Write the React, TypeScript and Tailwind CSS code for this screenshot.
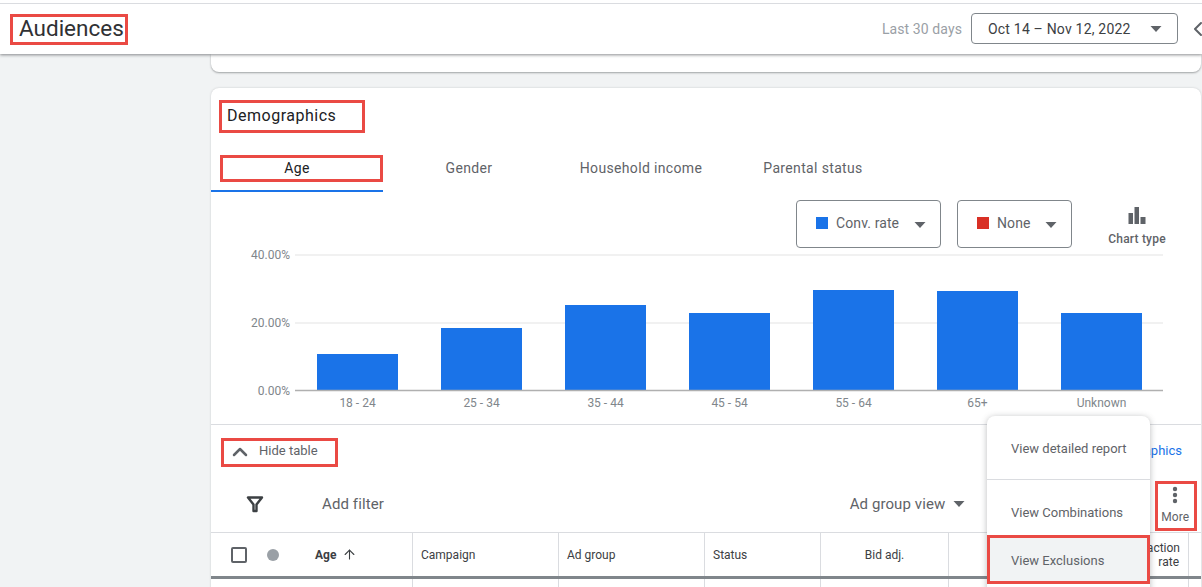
import React from "react";
import { ArrowUp, ChevronLeft, ChevronUp } from "lucide-react";

const bars = [
  { label: "18 - 24", top: 354 },
  { label: "25 - 34", top: 328 },
  { label: "35 - 44", top: 305 },
  { label: "45 - 54", top: 313 },
  { label: "55 - 64", top: 290 },
  { label: "65+", top: 291 },
  { label: "Unknown", top: 313 },
];

const tabs = ["Age", "Gender", "Household income", "Parental status"];

function Caret({ className }: { className?: string }) {
  return (
    <svg width="12" height="6" viewBox="0 0 12 6" className={className}>
      <path d="M0.5 0h11L6 6z" fill="currentColor" />
    </svg>
  );
}

function Chart() {
  return (
    <svg width="991" height="172" viewBox="211 245 991 172" className="block font-['Roboto',sans-serif]">
      <line x1="295" x2="1163" y1="255" y2="255" stroke="#ececec" strokeWidth="1.5" />
      <line x1="295" x2="1163" y1="323" y2="323" stroke="#ececec" strokeWidth="1.5" />
      {bars.map((b, i) => (
        <rect key={b.label} x={317 + i * 124} y={b.top} width="81" height={391 - b.top} fill="#1a73e8" />
      ))}
      <line x1="295" x2="1163" y1="390.5" y2="390.5" stroke="#b0b0b0" strokeWidth="1.5" />
      {["40.00%", "20.00%", "0.00%"].map((t, i) => (
        <text key={t} x="290" y={259 + i * 68} textAnchor="end" fontSize="12" fill="#80868b">
          {t}
        </text>
      ))}
      {bars.map((b, i) => (
        <text key={b.label} x={357.5 + i * 124} y={407} textAnchor="middle" fontSize="12" fill="#80868b">
          {b.label}
        </text>
      ))}
    </svg>
  );
}

function Selector({ color, label, width }: { color: string; label: string; width: string }) {
  return (
    <div className={`${width} h-12 flex items-center pl-[19px] pr-3.5 border border-[#80868b] rounded bg-white`}>
      <span className={`w-3 h-3 -mt-0.5 ${color}`} />
      <span className="ml-2 -mt-0.5 text-sm tracking-[0.1px] text-[#5f6368]">{label}</span>
      <Caret className="ml-auto mt-0.5 text-[#5f6368]" />
    </div>
  );
}

export default function App() {
  return (
    <div className="relative w-[1202px] h-[587px] overflow-hidden bg-[#f1f3f4] font-['Roboto',sans-serif] text-[#3c4043]">
      <header className="relative z-10 h-[54px] pt-[3px] bg-white shadow-[0_1px_3px_rgba(60,64,67,0.6)]">
        <div className="h-[51px] border-t border-[#dadce0] flex items-center pl-[19px]">
          <h1 className="text-[22.5px] text-[#303134] leading-none -mt-[2px]">Audiences</h1>
          <span className="ml-auto text-sm tracking-[0.1px] text-[#9aa0a6]">Last 30 days</span>
          <div className="ml-[9px] -mt-px w-[207px] h-[31px] flex items-center pl-4 pr-[15px] border border-[#80868b] rounded text-sm tracking-[0.2px] text-[#3c4043]">
            Oct 14 – Nov 12, 2022
            <Caret className="ml-auto text-[#5f6368]" />
          </div>
          <ChevronLeft size={24} strokeWidth={2} className="ml-2 -mr-[8px] w-[24px] text-[#5f6368]" />
        </div>
      </header>

      <main className="pl-[211px] pr-px">
        <div className="h-[18px] bg-white rounded-b-lg shadow-[0_1px_2px_rgba(60,64,67,0.45)]" />

        <section className="mt-4 h-[520px] bg-white rounded-t-lg shadow-[0_0_2px_rgba(60,64,67,0.25)]">
          <h2 className="pt-4 pl-4 h-[63px] text-base font-[450] tracking-[0.5px] text-[#202124]">Demographics</h2>

          <div className="flex h-[41px]">
            {tabs.map((t, i) => (
              <div
                key={t}
                className={
                  i === 0
                    ? "w-[172px] pt-[7px] text-center text-sm font-[450] tracking-[0.35px] text-[#202124] border-b-2 border-[#1a73e8]"
                    : "w-[172px] pt-[7px] text-center text-sm font-[450] tracking-[0.35px] text-[#5f6368]"
                }
              >
                {t}
              </div>
            ))}
          </div>

          <div className="flex h-[53px] pt-2 pl-[585px] gap-4">
            <Selector color="bg-[#1a73e8]" label="Conv. rate" width="w-[145px]" />
            <Selector color="bg-[#d93025]" label="None" width="w-[115px]" />
            <div className="ml-[19px] flex flex-col items-center text-xs font-medium tracking-[0.2px] text-[#5f6368]">
              <svg width="18" height="17" viewBox="0 0 18 17" className="mt-[7px] shrink-0">
                <path d="M0.5 6h4.5v11H0.5zM6.5 0h4.5v17H6.5zM12.5 10h5v7h-5z" fill="#5f6368" />
              </svg>
              <span className="mt-[7px] w-[60px] text-center whitespace-nowrap">Chart type</span>
            </div>
          </div>

          <Chart />

          <div className="h-[55px] mt-[7px] border-t border-[#dadce0] flex items-center pl-[17px] pr-[19px]">
            <ChevronUp size={24} strokeWidth={2.5} className="text-[#5f6368]" />
            <span className="ml-[7px] -mt-0.5 text-[13px] text-[#5f6368]">Hide table</span>
            <a className="ml-auto -mt-0.5 text-[13px] font-normal text-[#1a73e8]">View demographics</a>
          </div>

          <div className="h-[53px] flex items-center pr-3">
            <svg width="18" height="18" viewBox="0 0 18 18" className="ml-[35px] -mt-1" fill="none">
              <path d="M2 2.5h14L10.5 9.5V16h-3V9.5z" stroke="#3c4043" strokeWidth="2.4" strokeLinejoin="round" />
            </svg>
            <span className="ml-[58px] -mt-[3px] text-[15px] font-[450] tracking-[0.1px] text-[#5f6368]">Add filter</span>
            <span className="ml-auto -mt-[3px] text-[15px] font-[450] tracking-[0.1px] text-[#5f6368]">Ad group view</span>
            <Caret className="ml-2 -mt-1 text-[#5f6368]" />
            <div className="ml-[196px] flex flex-col items-center text-xs font-[450] text-[#5f6368]">
              <svg width="6" height="18" viewBox="0 0 6 18">
                <circle cx="3" cy="3" r="2.2" fill="#5f6368" />
                <circle cx="3" cy="9" r="2.2" fill="#5f6368" />
                <circle cx="3" cy="15" r="2.2" fill="#5f6368" />
              </svg>
              <span className="mt-[5px]">More</span>
            </div>
          </div>

          <div className="grid grid-cols-[202px_146px_146px_116px_128px_240px_1fr] h-[47px] border-t border-[#dadce0] border-b-[3px] border-b-[#80868b] text-xs font-[450] text-[#3c4043]">
            <div className="flex items-center pl-5 border-r border-[#dadce0]">
              <span className="w-4 h-4 border-2 border-[#5f6368] rounded-[2px]" />
              <span className="ml-5 w-3 h-3 rounded-full bg-[#9aa0a6]" />
              <span className="ml-9 font-bold">Age</span>
              <ArrowUp size={15} strokeWidth={1.75} className="ml-1.5 text-[#3c4043]" />
            </div>
            <div className="flex items-center pl-2 border-r border-[#dadce0]">Campaign</div>
            <div className="flex items-center pl-2 border-r border-[#dadce0]">Ad group</div>
            <div className="flex items-center pl-2 border-r border-[#dadce0]">Status</div>
            <div className="flex items-center justify-center border-r border-[#dadce0]">Bid adj.</div>
            <div className="flex flex-col items-end justify-center pr-2 leading-[14px] border-r border-[#dadce0]">
              <span>Conversion action</span>
              <span className="pr-px">rate</span>
            </div>
            <div />
          </div>

          <div className="grid grid-cols-[202px_146px_146px_116px_128px_240px_1fr] h-10">
            <div className="border-r border-[#dadce0]" />
            <div className="border-r border-[#dadce0]" />
            <div className="border-r border-[#dadce0]" />
            <div className="border-r border-[#dadce0]" />
            <div className="border-r border-[#dadce0]" />
            <div className="border-r border-[#dadce0]" />
            <div />
          </div>
        </section>
      </main>

      {/* menu over the table */}
      <div className="absolute z-20 left-[987px] top-[416px] w-[163px] h-[190px] bg-white rounded-lg shadow-[0_1px_6px_rgba(60,64,67,0.35)] text-[13px] text-[#5f6368]">
        <div className="h-[64px] pt-[24px] pl-6 border-b border-[#dadce0] leading-[18px]">View detailed report</div>
        <div className="h-[55px] pt-[24px] pl-6 leading-[18px]">View Combinations</div>
        <div className="h-[49px] pt-[17px] pl-6 bg-[#f1f3f4] leading-[18px]">View Exclusions</div>
      </div>

      {/* red annotation boxes */}
      <div className="absolute z-30 left-[10px] top-[14px] w-[118px] h-[31px] border-[3px] border-[#ea4a44]" />
      <div className="absolute z-30 left-[219px] top-[100px] w-[146px] h-[33px] border-[3px] border-[#ea4a44]" />
      <div className="absolute z-30 left-[220px] top-[155px] w-[163px] h-[27px] border-[3px] border-[#ea4a44]" />
      <div className="absolute z-30 left-[221px] top-[438px] w-[117px] h-[29px] border-[3px] border-[#ea4a44]" />
      <div className="absolute z-30 left-[1155px] top-[481px] w-[42px] h-[50px] border-[3px] border-[#ea4a44]" />
      <div className="absolute z-30 left-[987px] top-[535px] w-[163px] h-[49px] border-[3px] border-[#ea4a44]" />
    </div>
  );
}
